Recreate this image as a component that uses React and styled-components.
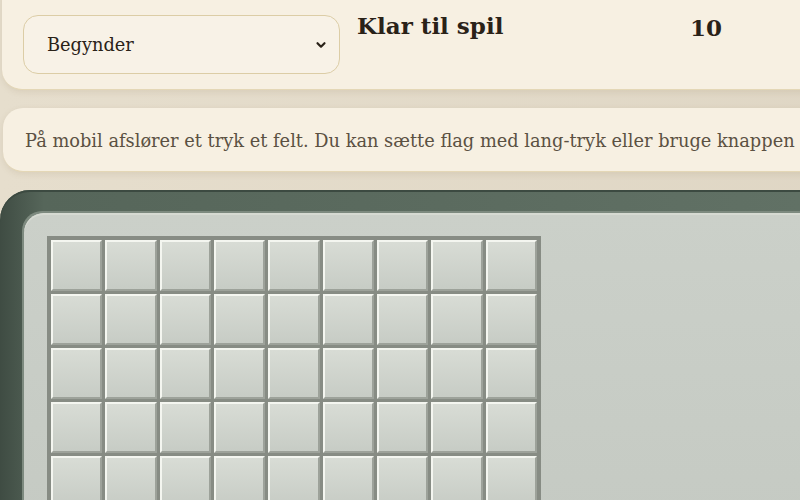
import React from 'react';
import styled, { createGlobalStyle } from 'styled-components';

const Global = createGlobalStyle`
  html, body {
    margin: 0;
    padding: 0;
    overflow: hidden;
    background: #e3dac8;
  }
  body {
    font-family: "DejaVu Serif", Georgia, serif;
    color: #2a2218;
  }
`;

const Page = styled.div`
  width: 1100px;
  height: 500px;
  padding: 0 0 0 2px;
  box-sizing: border-box;
  display: flex;
  flex-direction: column;
  gap: 18px;
  background: linear-gradient(90deg, #e6decd 0%, #ddd4c2 100%);
`;

const Card = styled.section`
  flex-shrink: 0;
  background: #f7f0e2;
  border-radius: 20px;
  border-bottom: 1px solid #e4d7b6;
  box-shadow: 0 2px 6px rgba(120, 100, 60, 0.12);
`;

const TopCard = styled(Card)`
  margin-top: -20px;
  height: 110px;
  box-sizing: border-box;
  padding: 35px 20px 0 21px;
  display: flex;
  align-items: flex-start;
  gap: 17px;
`;

const SelectBox = styled.div`
  width: 317px;
  height: 59px;
  box-sizing: border-box;
  border: 1px solid #dccda6;
  border-radius: 15px;
  background: #f8f2e7;
  display: flex;
  align-items: center;
  padding: 0 12px 0 23px;
  font-size: 17.8px;
  color: #2a2218;
`;

const SelectLabel = styled.span`
  flex: 1;
`;

const Status = styled.h2`
  margin: -3px 0 0;
  width: 316px;
  font-size: 23px;
  font-weight: bold;
  color: #2a2218;
`;

const Counter = styled.div`
  margin-top: -1px;
  font-size: 23px;
  font-weight: bold;
  color: #2a2218;
`;

const InfoCard = styled(Card)`
  height: 64px;
  box-sizing: border-box;
  margin-left: 1px;
  padding: 2px 22px 0;
  display: flex;
  align-items: center;
  font-size: 17.8px;
  color: #5b5142;
  white-space: nowrap;
`;

const Board = styled.div`
  margin-left: -2px;
  flex: 1;
  border-radius: 30px 30px 0 0;
  background: linear-gradient(90deg, #3f4c43 0%, #56665a 4%, #5b6b5f 40%, #66766a 100%);
  box-shadow: inset 0 2px 0 #3c4a41;
  padding: 23px 0 0 24px;
`;

const Panel = styled.div`
  height: 100%;
  border-radius: 20px 0 0 0;
  background: linear-gradient(180deg, #cbd0c9 0%, #c5cac3 100%);
  box-shadow: inset 0 2px 0 #d6dad2, -2px -2px 0 #7d8a7f;
  padding: 23px 0 0 23px;
`;

const Grid = styled.div`
  display: inline-grid;
  grid-template-columns: repeat(9, 51.33px);
  grid-auto-rows: 51px;
  gap: 3px;
  padding: 4px 4px 0 4px;
  background: #878c84;
`;

const Cell = styled.button`
  padding: 0;
  margin: 0;
  box-sizing: border-box;
  border-style: solid;
  border-width: 2px;
  border-color: #f4f6f0 #9da29a #9da29a #f4f6f0;
  background: linear-gradient(180deg, #d8dcd5 0%, #c7ccc5 100%);
  cursor: pointer;
`;

const Chevron = () => (
  <svg width="12" height="12" viewBox="0 0 12 12">
    <path d="M2.5 4.2 L6 7.7 L9.5 4.2" fill="none" stroke="#2a2218" strokeWidth="2.2" strokeLinecap="round" strokeLinejoin="round" />
  </svg>
);

export default function App() {
  const cells = Array.from({ length: 45 }, (_, i) => i);
  return (
    <>
      <Global />
      <Page>
        <TopCard>
          <SelectBox>
            <SelectLabel>Begynder</SelectLabel>
            <Chevron />
          </SelectBox>
          <Status>Klar til spil</Status>
          <Counter>10</Counter>
        </TopCard>
        <InfoCard>
          På mobil afslører et tryk et felt. Du kan sætte flag med lang-tryk eller bruge knappen til at skifte tilstand.
        </InfoCard>
        <Board>
          <Panel>
            <Grid>
              {cells.map(i => <Cell key={i} aria-label="felt" />)}
            </Grid>
          </Panel>
        </Board>
      </Page>
    </>
  );
}
